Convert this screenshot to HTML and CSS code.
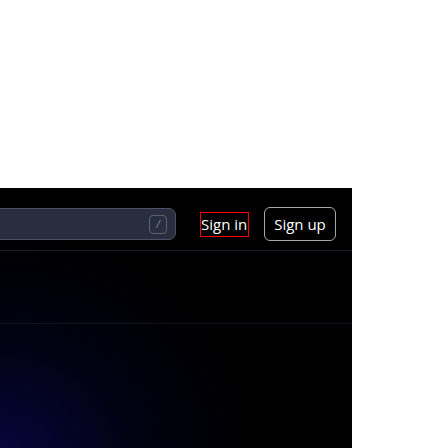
FILE: index.html
```html
<!DOCTYPE html>
<html>
<head>
<meta charset="utf-8">
<link rel="stylesheet" href="styles.css">
</head>
<body>
<div class="panel">
  <header class="topbar">
    <div class="search">
      <span class="caret"></span>
      <span class="kbd">/</span>
    </div>
    <nav class="auth">
      <a class="signin">Sign in</a>
      <a class="signup">Sign up</a>
    </nav>
  </header>
  <div class="band"></div>
</div>
</body>
</html>
```
FILE: styles.css
```css
html, body {
  margin: 0;
  padding: 0;
  background: #ffffff;
  width: 448px;
  height: 448px;
  overflow: hidden;
}
.panel {
  margin-top: 188px;
  width: 352px;
  height: 260px;
  background:
    radial-gradient(ellipse 260px 230px at 0px 270px, rgba(6, 6, 62, 1), rgba(3, 3, 32, 0.6) 50%, rgba(0, 0, 0, 0) 100%),
    #000000;
  font-family: "Open Sans", "Liberation Sans", sans-serif;
  overflow: hidden;
}
.topbar {
  height: 63px;
  box-sizing: border-box;
  padding-top: 20px;
  border-bottom: 1px solid #1b1d22;
  display: flex;
  align-items: flex-start;
}
.search {
  margin-left: -30px;
  width: 206px;
  height: 32px;
  box-sizing: border-box;
  background: #282e3e;
  border: 1px solid #4a5163;
  border-radius: 7px;
  display: flex;
  align-items: center;
  justify-content: space-between;
  padding: 0 8px 0 30px;
}
.caret {
  width: 2px;
  height: 2px;
  margin-left: -30px;
  margin-top: 5px;
  background: #d0d4dc;
}
.kbd {
  width: 18px;
  height: 19px;
  box-sizing: border-box;
  border: 1px solid #596073;
  border-radius: 4px;
  color: #8a90a0;
  font-size: 10px;
  line-height: 17px;
  text-align: center;
  font-style: italic;
}
.auth {
  display: flex;
  align-items: center;
  margin-left: 24px;
  margin-top: -1px;
  height: 34px;
}
.signin {
  color: #ffffff;
  font-size: 15px;
  line-height: 23px;
  border: 1px solid #ff0000;
  width: 47px;
  height: 23px;
  white-space: nowrap;
  overflow: hidden;
}
.signup {
  margin-left: 15px;
  color: #ffffff;
  font-size: 15px;
  height: 34px;
  box-sizing: border-box;
  line-height: 32px;
  padding: 0 8px;
  border: 1px solid #a7a7a7;
  border-radius: 6px;
  width: 72px;
  text-align: center;
  white-space: nowrap;
}
.band {
  height: 72px;
  border-bottom: 1px solid #12141a;
}
```
